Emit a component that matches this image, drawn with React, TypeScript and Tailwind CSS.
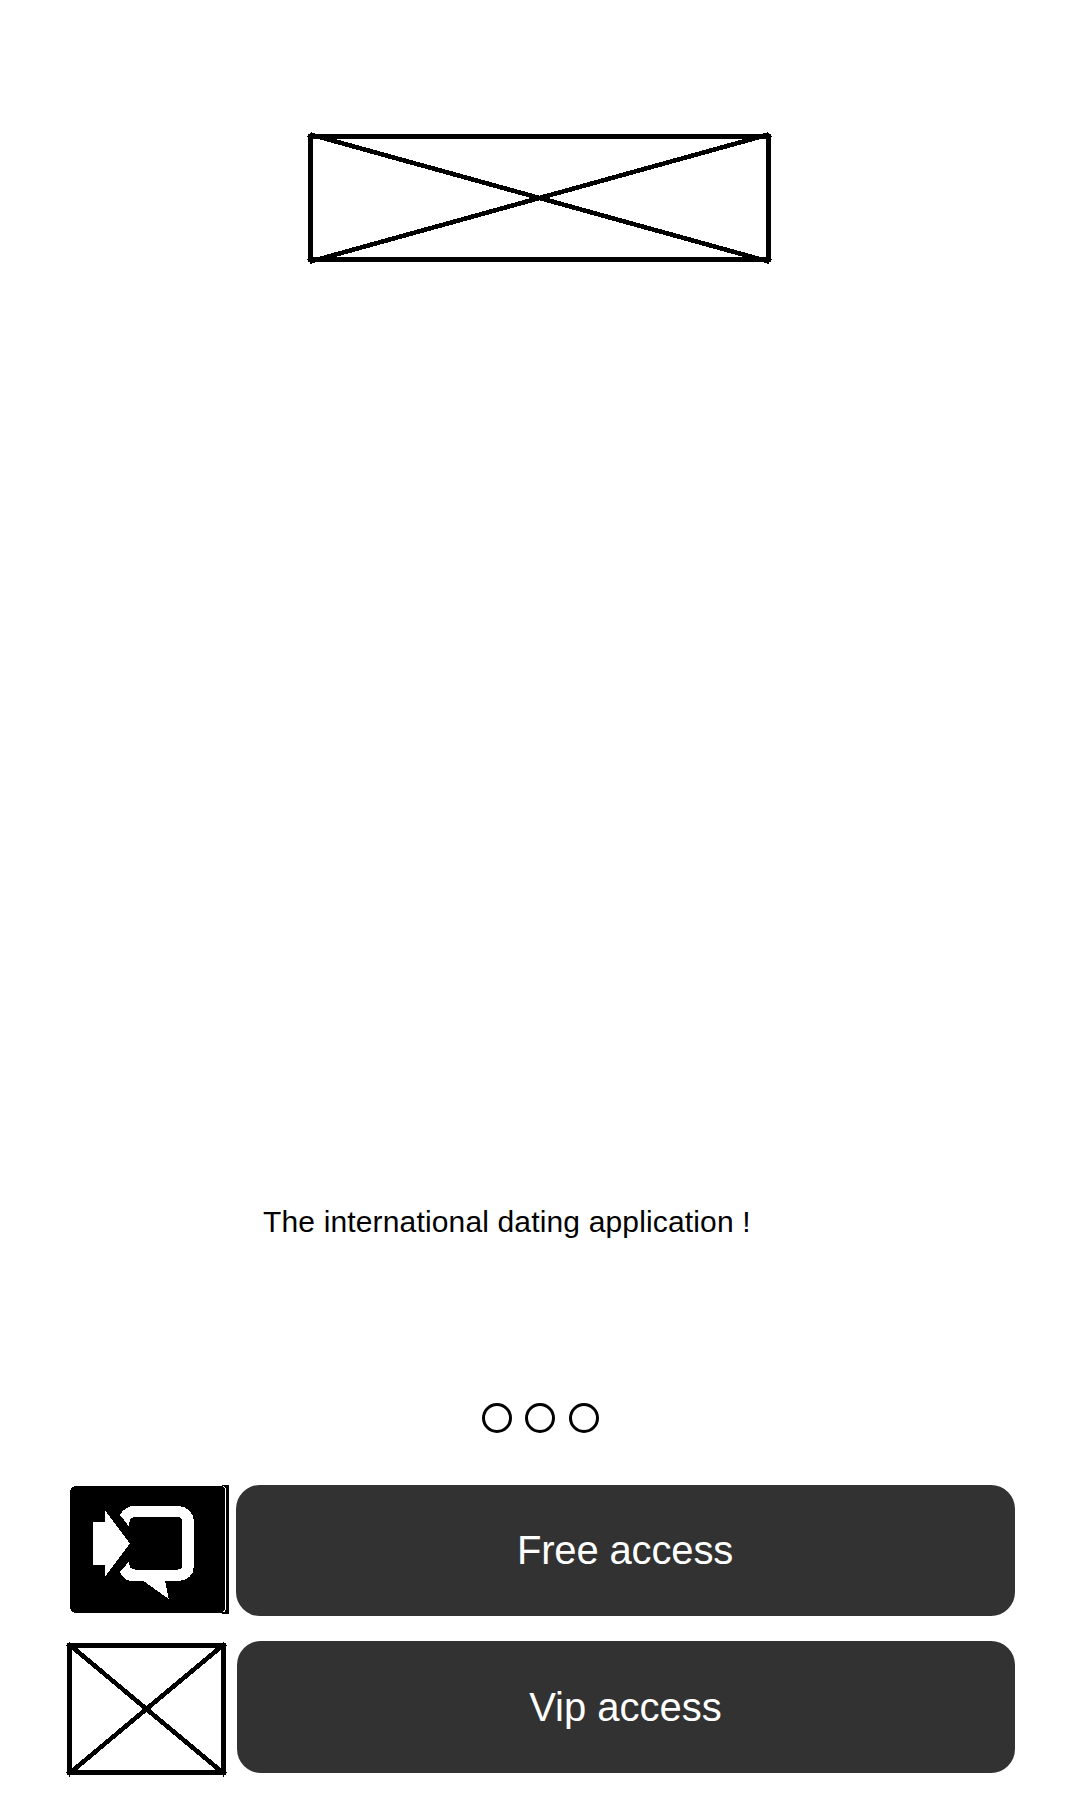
import React from "react";

interface PlaceholderProps {
  width: number;
  height: number;
  inset: number;
  className: string;
}

function Placeholder({ width, height, inset, className }: PlaceholderProps) {
  const corners = [
    [2.5, 2.5],
    [width - 2.5, 2.5],
    [2.5, height - 2.5],
    [width - 2.5, height - 2.5],
  ];
  return (
    <svg
      className={`block shrink-0 overflow-visible ${className}`}
      viewBox={`0 0 ${width} ${height}`}
      fill="none"
      stroke="#000"
      shapeRendering="crispEdges"
    >
      <rect x="2.5" y="2.5" width={width - 5} height={height - 5} strokeWidth="5" />
      <path
        d={`M2.5 ${inset}L${width - 2.5} ${height - inset}M${width - 2.5} ${inset}L2.5 ${height - inset}`}
        strokeWidth="4.6"
      />
      {corners.map(([x, y]) => (
        <path key={`${x}-${y}`} d={`M${x - 3.5} ${y}h7M${x} ${y - 4}v8`} strokeWidth="1.2" />
      ))}
    </svg>
  );
}

function ChatLoginIcon() {
  return (
    <svg className="block h-[129px] w-[159px] shrink-0" viewBox="70 1485 159 129" shapeRendering="crispEdges">
      <rect x="70" y="1486" width="157" height="127" rx="6" fill="#000" />
      <path d="M222 1485h7v129h-7z" fill="#000" />
      <path
        d="M223 1486.5Q225.5 1487 225.5 1490V1608Q225.5 1611.5 223 1612"
        fill="none"
        stroke="#fff"
        strokeWidth="1"
      />
      <path d="M93 1522H105V1510.5L130 1543.5L105 1576.5V1565H93Z" fill="#fff" />
      <path
        d="M120 1515Q125 1506 134 1506H178C187 1506 194 1513 194 1521V1566C194 1575 187 1581 178 1581H165L168.7 1599L143.5 1581H132Q124 1581 120 1572L129 1561.5Q129 1569.5 135 1569.5H178Q182 1569.5 182 1565.500V1521Q182 1517 178 1517H135Q129 1517 129 1526.5Z"
        fill="#fff"
      />
    </svg>
  );
}

export default function App() {
  return (
    <main className="flex h-[1800px] w-[1080px] flex-col overflow-hidden bg-white pt-[134px] font-['Liberation_Sans',Arial,sans-serif] text-black">
      <Placeholder width={463} height={128} inset={0.5} className="ml-[308px] h-[128px] w-[463px]" />

      <p className="mt-[943px] ml-[263px] h-[34px] text-[30px] leading-[34px] tracking-[0.15px] whitespace-nowrap">
        The international dating application !
      </p>

      <div className="mt-[164px] ml-[482px] flex">
        <span className="size-[30px] rounded-full border-3 border-black" />
        <span className="ml-[13px] size-[30px] rounded-full border-3 border-black" />
        <span className="ml-[14px] size-[30px] rounded-full border-3 border-black" />
      </div>

      <div className="mt-[52px] ml-[70px] flex items-start gap-[7px]">
        <ChatLoginIcon />
        <button className="h-[131px] w-[779px] rounded-[24px] bg-[#323232] pr-px pb-[2px] text-[40px] leading-[46px] tracking-[-0.15px] text-white">
          Free access
        </button>
      </div>

      <div className="mt-[25px] ml-[67px] flex items-start gap-[11px]">
        <Placeholder width={159} height={132} inset={1.8} className="mt-[2px] h-[132px] w-[159px]" />
        <button className="h-[132px] w-[778px] rounded-[24px] bg-[#323232] pr-px text-[40px] leading-[46px] text-white">
          Vip access
        </button>
      </div>
    </main>
  );
}
